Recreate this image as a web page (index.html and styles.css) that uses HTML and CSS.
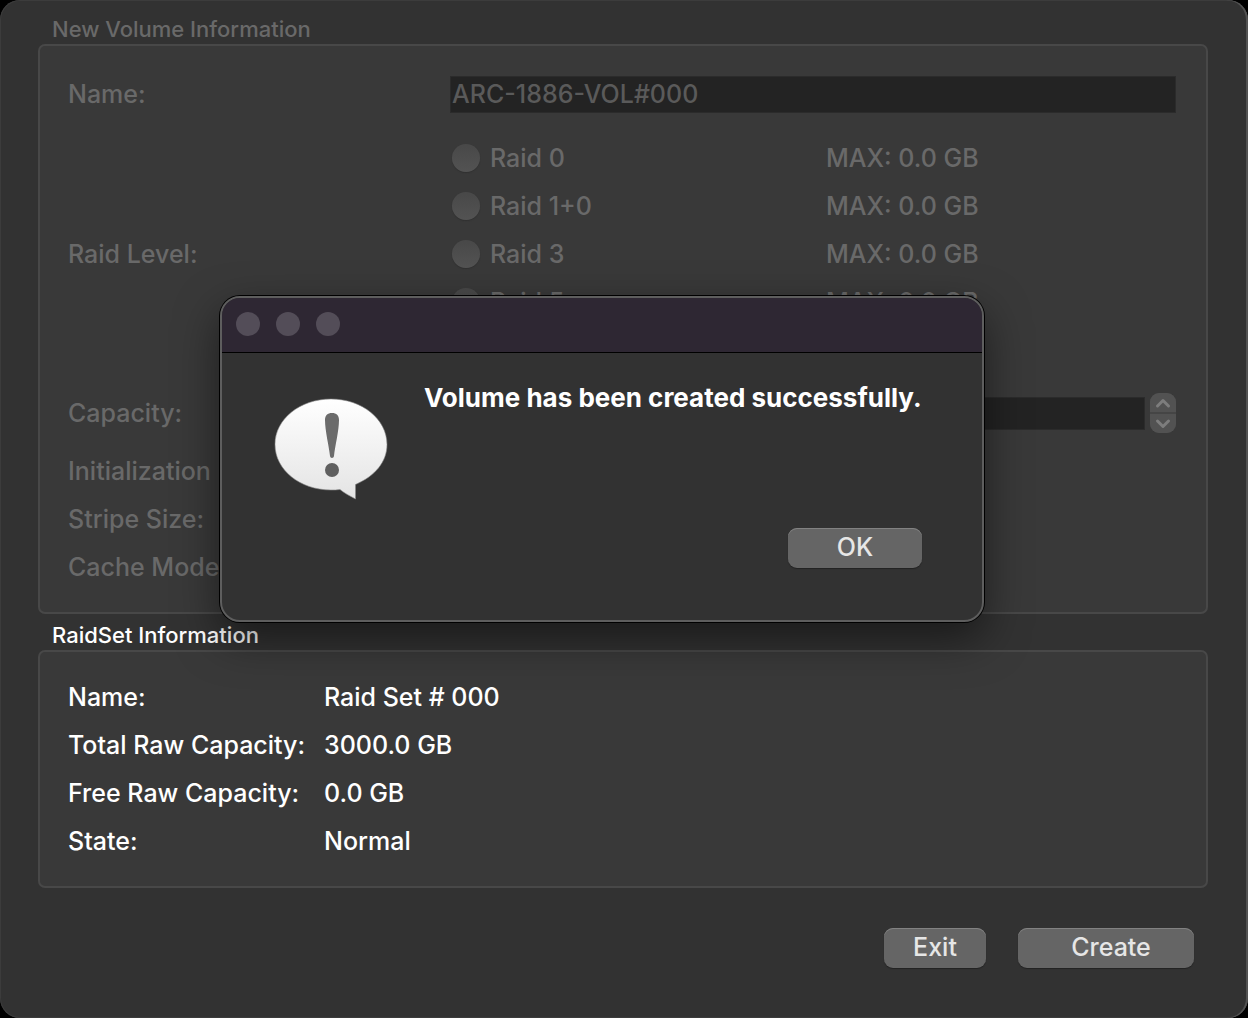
FILE: index.html
```html
<!DOCTYPE html>
<html lang="en">
<head>
    <meta charset="UTF-8">
    <meta name="viewport" content="width=device-width, initial-scale=1.0">
    <title>Create Volume</title>
    <link rel="stylesheet" href="styles.css">
</head>
<body>
    <main class="window">
        <h2 class="group-title disabled">New Volume Information</h2>
        <form class="panel volume-form disabled">
            <div class="row name-row">
                <label for="volume-name">Name:</label>
                <input class="field" type="text" id="volume-name" value="ARC-1886-VOL#000" disabled>
            </div>

            <div class="row level-row" role="radiogroup" aria-labelledby="level-label">
                <span id="level-label">Raid Level:</span>
                <div class="levels">
                    <div class="level">
                        <label><input type="radio" name="level" disabled>Raid 0</label>
                        <span>MAX: 0.0 GB</span>
                    </div>
                    <div class="level">
                        <label><input type="radio" name="level" disabled>Raid 1+0</label>
                        <span>MAX: 0.0 GB</span>
                    </div>
                    <div class="level">
                        <label><input type="radio" name="level" disabled>Raid 3</label>
                        <span>MAX: 0.0 GB</span>
                    </div>
                    <div class="level">
                        <label><input type="radio" name="level" disabled>Raid 5</label>
                        <span>MAX: 0.0 GB</span>
                    </div>
                    <div class="level">
                        <label><input type="radio" name="level" disabled>Raid 6</label>
                        <span>MAX: 0.0 GB</span>
                    </div>
                </div>
            </div>

            <div class="row capacity-row">
                <label for="capacity">Capacity:</label>
                <div class="spinner">
                    <input class="field" type="text" id="capacity" disabled>
                    <div class="stepper">
                        <button type="button" aria-label="Increase" disabled>
                            <svg width="16" height="12" viewBox="0 0 16 12"><path d="M2.5 9 8 3.5 13.5 9"/></svg>
                        </button>
                        <button type="button" aria-label="Decrease" disabled>
                            <svg width="16" height="12" viewBox="0 0 16 12"><path d="M2.5 3 8 8.5 13.5 3"/></svg>
                        </button>
                    </div>
                </div>
            </div>

            <div class="row option-row">
                <label for="init-mode">Initialization</label>
                <select id="init-mode" disabled></select>
            </div>
            <div class="row option-row">
                <label for="stripe-size">Stripe Size:</label>
                <select id="stripe-size" disabled></select>
            </div>
            <div class="row option-row">
                <label for="cache-mode">Cache Mode</label>
                <select id="cache-mode" disabled></select>
            </div>
        </form>

        <h2 class="group-title">RaidSet Information</h2>
        <dl class="panel raidset">
            <dt>Name:</dt>
            <dd>Raid Set # 000</dd>
            <dt>Total Raw Capacity:</dt>
            <dd>3000.0 GB</dd>
            <dt>Free Raw Capacity:</dt>
            <dd>0.0 GB</dd>
            <dt>State:</dt>
            <dd>Normal</dd>
        </dl>

        <div class="actions">
            <button type="button" class="btn btn-exit">Exit</button>
            <button type="button" class="btn btn-create">Create</button>
        </div>
    </main>

    <div class="dialog" role="alertdialog" aria-labelledby="dialog-message">
        <div class="titlebar">
            <span class="light"></span>
            <span class="light"></span>
            <span class="light"></span>
        </div>
        <div class="dialog-body">
            <svg class="bubble" width="114" height="102" viewBox="0 0 114 102" aria-hidden="true">
                <defs>
                    <linearGradient id="bubble-fill" x1="0" y1="0" x2="0" y2="1">
                        <stop offset="0" stop-color="#ffffff"/>
                        <stop offset="1" stop-color="#e4e4e4"/>
                    </linearGradient>
                </defs>
                <path fill="url(#bubble-fill)" stroke="#8a8a8a" stroke-width="0.6" d="M57 1C88 1 113 21 113 46.5C113 64 101 78 81.5 86.5V101C76 98 70 95 66 91.5C63 92 60 92 57 92C26 92 1 72 1 46.5C1 21 26 1 57 1Z"/>
                <path fill="#6b6b6b" d="M51 22C51 17.500 53.500 15 58 15C62.500 15 65 17.500 65 22C65 33 61 48 60 58C59.700 60.500 56.300 60.500 56 58C55 48 51 33 51 22Z"/>
                <circle fill="#5f5f5f" cx="58" cy="72" r="7"/>
            </svg>
            <div class="dialog-content">
                <p id="dialog-message">Volume has been created successfully.</p>
                <button type="button" class="btn btn-ok">OK</button>
            </div>
        </div>
    </div>
</body>
</html>
```

FILE: styles.css
```css
* {
    box-sizing: border-box;
}
body {
    margin: 0;
    background: #000;
    color: #fff;
    font-family: Inter, "Liberation Sans", sans-serif;
    font-size: 25px;
    font-weight: 500;
    line-height: 48px;
}
input, button, select {
    font: inherit;
    color: inherit;
}
.window {
    min-height: 100vh;
    padding: 14px 40px 50px 38px;
    background: #323232;
    border-radius: 20px;
    box-shadow: inset -2px 0 0 #525252, inset 0 0 0 1px #3c3c3c;
}
.group-title {
    margin: 6px 14px 0;
    font-size: 22px;
    font-weight: 500;
    line-height: 30px;
}
.group-title:first-child {
    margin-top: 0;
}
.disabled {
    color: #696969;
}
.panel {
    margin: 0;
    border: 2px solid #484848;
    border-radius: 7px;
    background: #393939;
}

/* New volume form */
.volume-form {
    padding: 30px 30px 21px 28px;
}
.row {
    display: grid;
    grid-template-columns: 382px 1fr;
    align-items: center;
}
.name-row {
    margin-bottom: 21px;
    line-height: 37px;
}
.field {
    width: 100%;
    height: 37px;
    padding: 0 1px;
    border: 1px solid #2b2b2b;
    border-radius: 0;
    background: #232323;
    color: #5a5a5a;
}
.level {
    display: grid;
    grid-template-columns: 376px 1fr;
    height: 48px;
}
.level label {
    display: flex;
    align-items: center;
    gap: 10px;
    padding-left: 2px;
}
.level input {
    appearance: none;
    width: 28px;
    height: 28px;
    margin: 0;
    border-radius: 50%;
    background: linear-gradient(#484848, #535353);
    box-shadow: 0 1px 1px #303030;
}
.capacity-row {
    margin: 19px 0 14px;
    line-height: 40px;
}
.spinner {
    display: flex;
    align-items: center;
    gap: 5px;
}
.spinner .field {
    flex: 1;
    height: 33px;
}
.stepper {
    display: flex;
    flex-direction: column;
    gap: 2px;
    width: 26px;
    height: 40px;
    border-radius: 9px;
    background: #454545;
    overflow: hidden;
}
.stepper button {
    display: flex;
    flex: 1;
    align-items: center;
    justify-content: center;
    padding: 0;
    border: none;
    background: #525252;
}
.stepper path {
    fill: none;
    stroke: #7d7d7d;
    stroke-width: 3;
    stroke-linecap: round;
    stroke-linejoin: round;
}
.option-row {
    height: 48px;
}
.option-row select {
    width: 240px;
    height: 36px;
    border: none;
    border-radius: 8px;
    background: #525252;
}

/* Raid set details */
.raidset {
    display: grid;
    grid-template-columns: 256px 1fr;
    padding: 21px 28px;
}
.raidset dd {
    margin: 0;
}

/* Buttons */
.actions {
    display: flex;
    justify-content: flex-end;
    gap: 32px;
    margin: 40px 14px 0;
}
.btn {
    height: 40px;
    padding: 0 0 2px;
    border: none;
    border-radius: 9px;
    background: #656565;
    box-shadow: inset 0 1px 0 #828282, 0 1px 1px #222;
    color: #e6e6e6;
    line-height: 38px;
}
.btn-exit {
    width: 102px;
}
.btn-create {
    width: 176px;
    padding-left: 10px;
}
.btn-ok {
    width: 134px;
}

/* Message dialog */
.dialog {
    position: absolute;
    top: 296px;
    left: 220px;
    width: 764px;
    border: 2px solid #5e5e5e;
    border-radius: 20px;
    background: #323232;
    box-shadow: 0 0 0 1px #000, 0 16px 44px rgba(0, 0, 0, 0.5);
    overflow: hidden;
}
.titlebar {
    display: flex;
    gap: 16px;
    height: 55px;
    padding: 14px;
    border-bottom: 1px solid #000;
    background: #2e2733;
}
.light {
    width: 24px;
    height: 24px;
    border-radius: 50%;
    background: #534d58;
}
.dialog-body {
    display: flex;
    gap: 36px;
    padding: 27px 60px 52px 52px;
}
.bubble {
    flex: none;
    margin-top: 18px;
}
.dialog-content {
    display: flex;
    flex: 1;
    flex-direction: column;
    align-items: flex-end;
    gap: 112px;
}
.dialog-content p {
    width: 100%;
    margin: 0;
    font-size: 26px;
    font-weight: 700;
    line-height: 36px;
    white-space: nowrap;
}
```
